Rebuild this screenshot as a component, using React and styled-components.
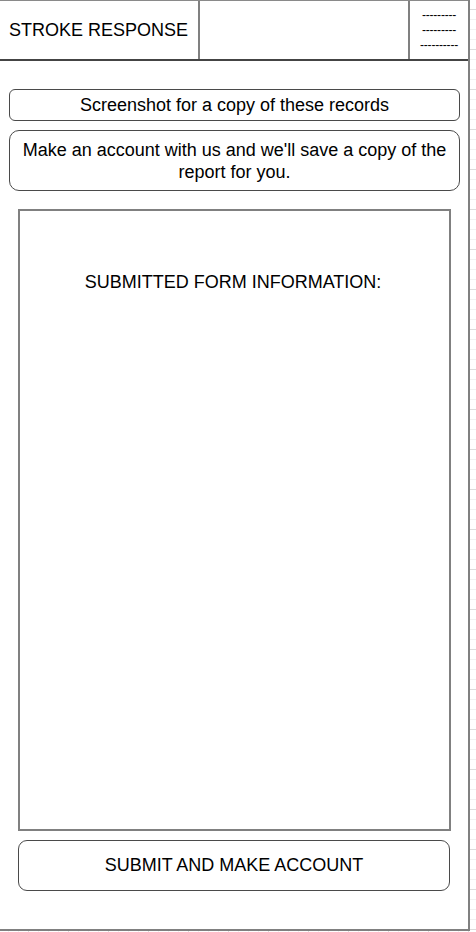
import React from 'react';
import styled, { createGlobalStyle } from 'styled-components';

const GlobalStyle = createGlobalStyle`
  html, body {
    margin: 0;
    padding: 0;
  }
  body {
    font-family: "Liberation Sans", Arial, sans-serif;
    color: #000;
    background-color: #fff;
    background-image:
      linear-gradient(to right, #dcdcdc 1px, transparent 1px),
      linear-gradient(to bottom, #dcdcdc 1px, transparent 1px),
      linear-gradient(to right, #f1f1f1 1px, transparent 1px),
      linear-gradient(to bottom, #f1f1f1 1px, transparent 1px);
    background-size: 40px 40px, 40px 40px, 10px 10px, 10px 10px;
    background-position: 28px 9px;
  }
`;

const App = () => {
  return (
    <>
      <GlobalStyle />
      <Frame>
        <Header>
          <TitleCell>STROKE RESPONSE</TitleCell>
          <EmptyCell />
          <MenuCell>
            <span>---------</span>
            <span>---------</span>
            <span>----------</span>
          </MenuCell>
        </Header>
        <Content>
          <NoteBox $height="32px" $radius="6px">
            Screenshot for a copy of these records
          </NoteBox>
          <NoteBox $height="61px" $radius="10px">
            Make an account with us and we'll save a copy of the report for you.
          </NoteBox>
          <FormPanel>
            <PanelTitle>SUBMITTED FORM INFORMATION:</PanelTitle>
          </FormPanel>
          <SubmitButton>SUBMIT AND MAKE ACCOUNT</SubmitButton>
        </Content>
      </Frame>
    </>
  );
};

export default App;

const Frame = styled.div`
  width: 470px;
  height: 931px;
  box-sizing: border-box;
  background: #fff;
  border-right: 2px solid #808080;
  border-bottom: 2px solid #808080;
  display: flex;
  flex-direction: column;
`;

const Header = styled.div`
  height: 61px;
  box-sizing: border-box;
  display: flex;
  border-top: 1px solid #8a8a8a;
  border-bottom: 2px solid #444;
`;

const TitleCell = styled.div`
  width: 200px;
  box-sizing: border-box;
  border-right: 2px solid #808080;
  padding-left: 9px;
  display: flex;
  align-items: center;
  font-size: 18px;
`;

const EmptyCell = styled.div`
  width: 210px;
  box-sizing: border-box;
  border-right: 2px solid #808080;
`;

const MenuCell = styled.div`
  flex: 1;
  display: flex;
  flex-direction: column;
  align-items: center;
  justify-content: center;
  font-size: 12px;
  line-height: 15px;
  letter-spacing: -0.2px;
`;

const Content = styled.div`
  display: flex;
  flex-direction: column;
  padding: 28px 0 0;
`;

const NoteBox = styled.div`
  margin: 0 9px 9px;
  width: 451px;
  height: ${(p) => p.$height};
  box-sizing: border-box;
  border: 1px solid #4a4a4a;
  border-radius: ${(p) => p.$radius};
  display: flex;
  align-items: center;
  justify-content: center;
  text-align: center;
  font-size: 18px;
  line-height: 22px;
  padding: 0 8px;
`;

const FormPanel = styled.div`
  margin: 9px 0 0 18px;
  width: 433px;
  height: 622px;
  box-sizing: border-box;
  border: 2px solid #808080;
  padding-top: 60px;
  text-align: center;
`;

const PanelTitle = styled.div`
  font-size: 18px;
  line-height: 22px;
  margin-left: -3px;
`;

const SubmitButton = styled.div`
  margin: 9px 0 0 18px;
  width: 432px;
  height: 51px;
  box-sizing: border-box;
  border: 1px solid #4a4a4a;
  border-radius: 9px;
  display: flex;
  align-items: center;
  justify-content: center;
  font-size: 18px;
`;
